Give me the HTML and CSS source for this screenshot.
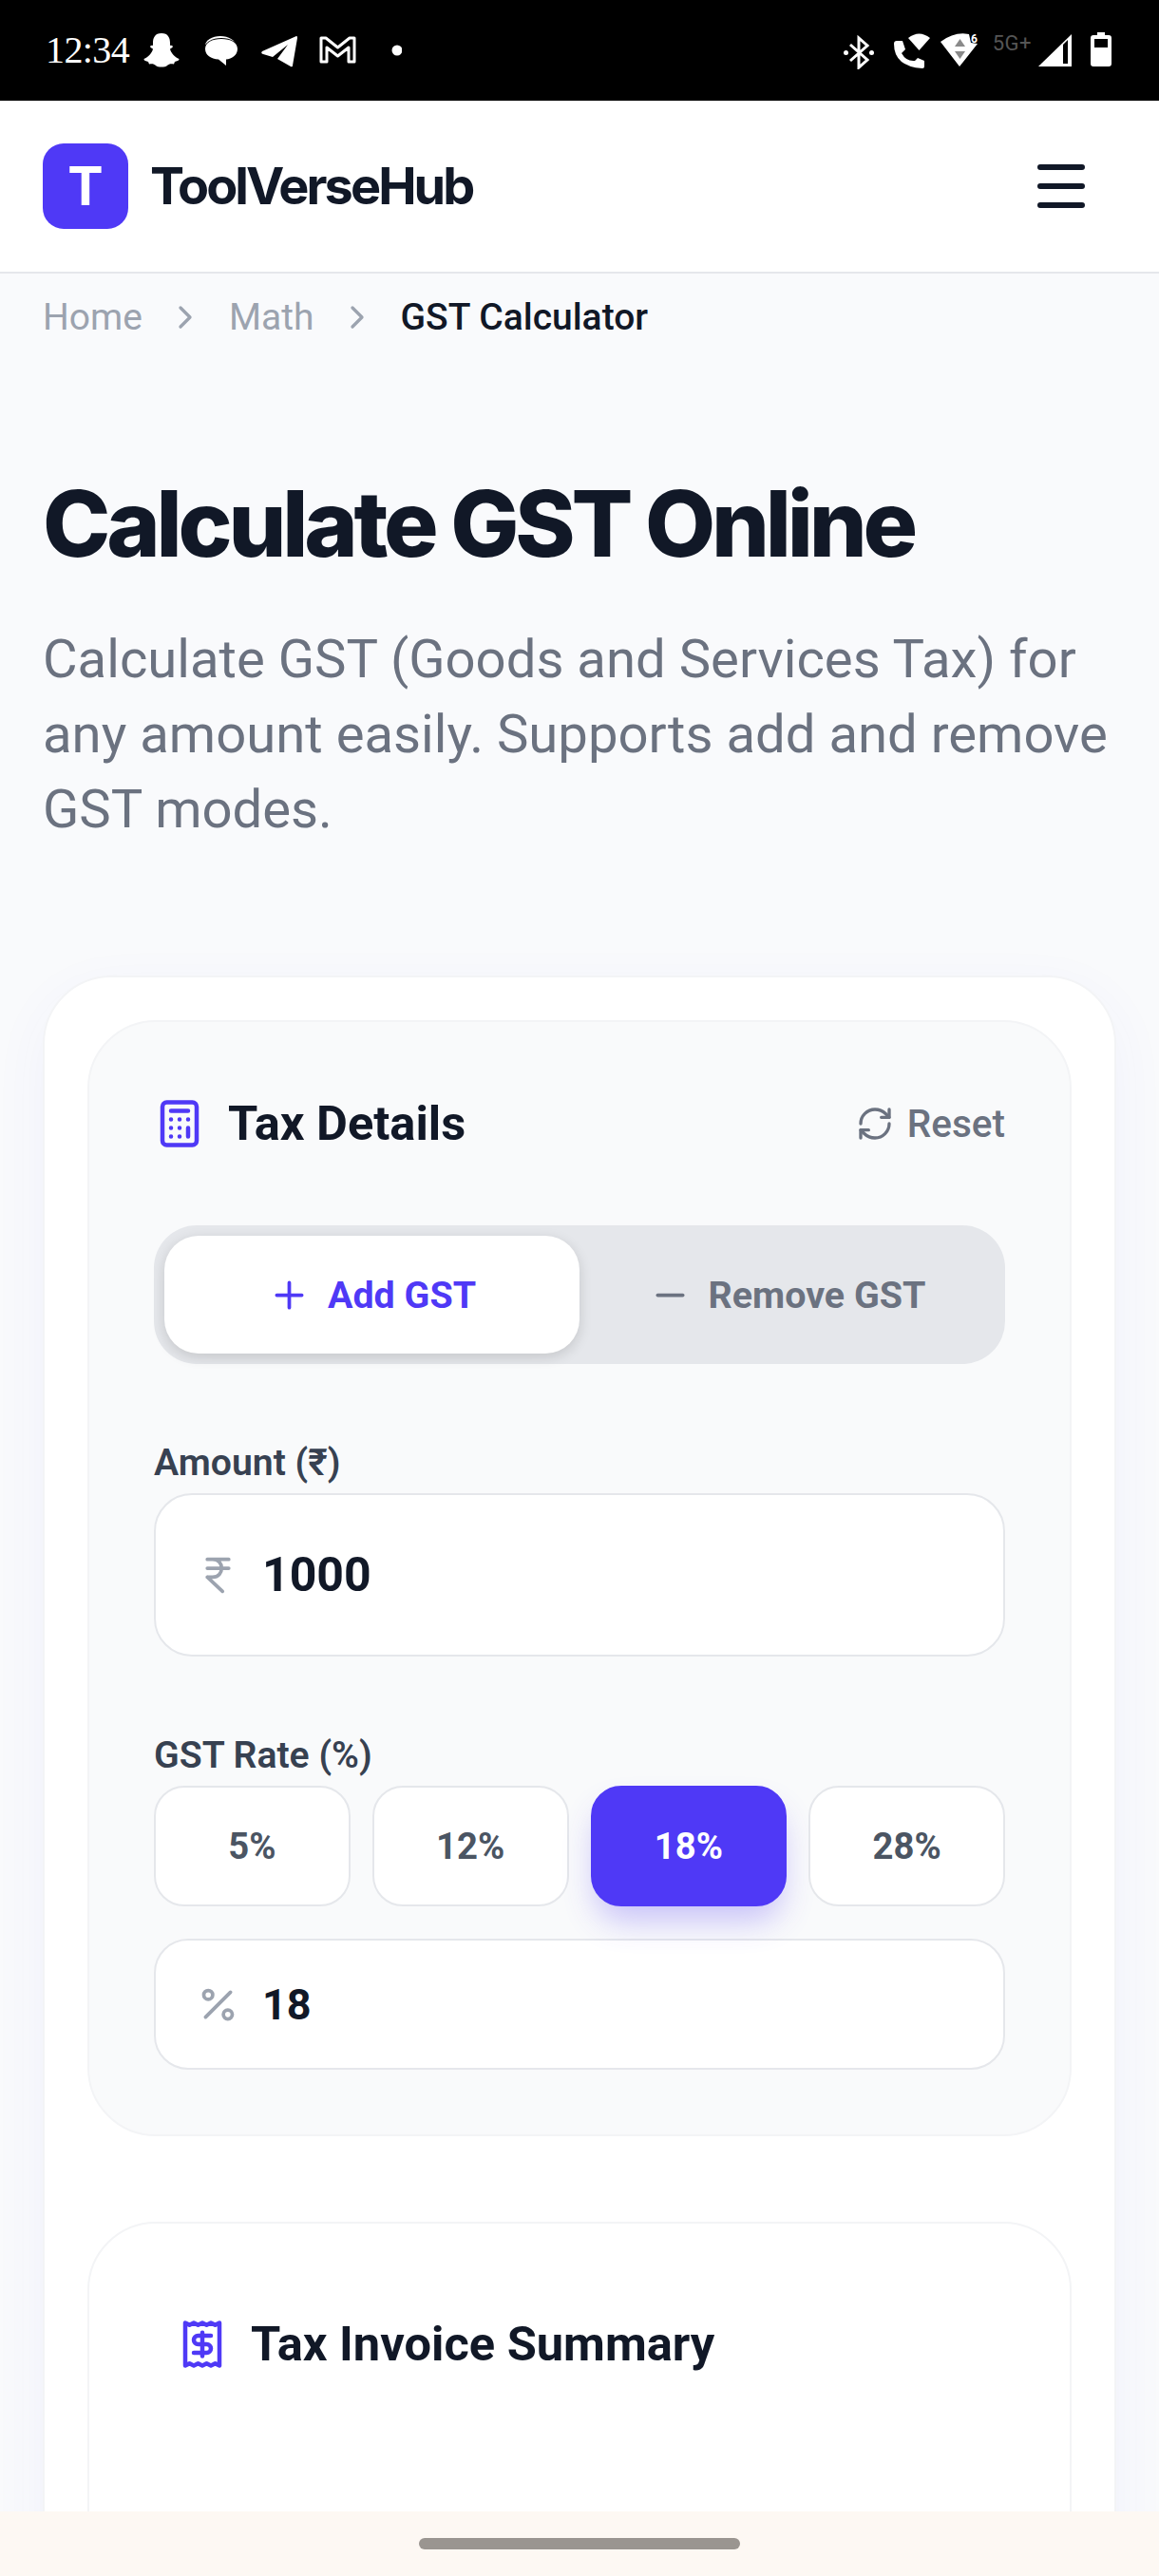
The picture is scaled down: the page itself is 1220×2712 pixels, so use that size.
FILE: index.html
```html
<!DOCTYPE html>
<html lang="en">
<head>
<meta charset="utf-8">
<title>GST Calculator - ToolVerseHub</title>
<link rel="stylesheet" href="styles.css">
</head>
<body>
<div class="status-bar">
  <div class="status-left">
    <span class="clock">12:34</span>
    <svg class="notif-icons" width="272" height="40" viewBox="0 0 272 40" fill="#fff">
      <path d="M19 2C12 2 10 7 10 12L10 15C8 14.5 6.5 15.5 7.5 17L10 18.5C9 23 5 27 .5 29C.5 31 3 31.5 5 32L6 34.5C9 34 11 34 13 36C15 38 23 38 25 36C27 34 29 34 32 34.5L33 32C35 31.5 37.5 31 37.5 29C33 27 29 23 28 18.5L30.5 17C31.5 15.5 30 14.5 28 15L28 12C28 7 26 2 19 2Z"/>
      <ellipse cx="81" cy="15" rx="16" ry="10"/>
      <ellipse cx="82" cy="18" rx="18" ry="11" fill="#000"/>
      <path d="M82 8C92 8 99 12 99 18.500C99 25 93 29 87 29.500L87 36L79 29.500C71 29 65 25 65 18.500C65 12 72 8 82 8Z"/>
      <path d="M161 5L125 21Q123 23 126 24L136 27L152 14L141 29L155 37Q157 38 157 36L162 7Q162 4.500 161 5Z"/>
      <path d="M187 7L192 7L204.500 17L217 7L222 7L222 32L216 32L216 17L204.500 26L193 17L193 32L187 32Z" fill="none" stroke="#fff" stroke-width="3" stroke-linejoin="round"/>
      <circle cx="267" cy="20" r="5.500"/>
    </svg>
  </div>
  <div class="status-right">
    <svg class="sys-icons" width="145" height="40" viewBox="0 0 145 40" fill="#fff">
      <path d="M7 14L25 30L16 38L16 7L25 15L7 31" fill="none" stroke="#fff" stroke-width="3"/>
      <circle cx="2.500" cy="22.500" r="2.500"/>
      <circle cx="29.500" cy="22.500" r="2.500"/>
      <path d="M68 7Q79.500 -2 91 7L79.500 20Z"/>
      <path d="M53 13Q53 10 56 10L62 10L65 19L61 23Q66 32 75 31L78 28L85 31L85 37Q85 39 83 39Q53 37 53 13Z"/>
      <path d="M102 11Q117 0 132 3L134 12L141 13L122 37Z"/>
      <path d="M122.500 8L117 16L128 16ZM117 21L128 21L122.500 29Z" fill="#8a8a8a"/>
      <text x="134" y="12" class="wifi-six">6</text>
    </svg>
    <span class="network-type">5G+</span>
    <svg class="sys-icons-end" width="77" height="40" viewBox="0 0 77 40" fill="#fff">
      <path d="M0 37L35 3L35 37Z"/>
      <path d="M26 14L31 9L31 34L26 34Z" fill="#000"/>
      <path d="M62 1H70V4H74Q77 4 77 7V34Q77 37 74 37H58Q55 37 55 34V7Q55 4 58 4H62Z"/>
      <rect x="59" y="8" width="14" height="9" fill="#000"/>
    </svg>
  </div>
</div>

<header class="site-header">
  <div class="brand">
    <span class="brand-mark">T</span>
    <span class="brand-name">ToolVerseHub</span>
  </div>
  <svg class="menu-icon" width="50" height="46" viewBox="0 0 50 46" fill="none" stroke="#111827" stroke-width="6" stroke-linecap="round">
    <path d="M3 3H47M3 23H47M3 43H47"/>
  </svg>
</header>

<main class="page">
  <nav class="crumbs">
    <span class="crumb">Home</span>
    <svg class="crumb-sep" width="40" height="40" viewBox="0 0 24 24" fill="none" stroke="#9ca3af" stroke-width="2" stroke-linecap="round" stroke-linejoin="round"><path d="m9 18 6-6-6-6"/></svg>
    <span class="crumb">Math</span>
    <svg class="crumb-sep" width="40" height="40" viewBox="0 0 24 24" fill="none" stroke="#9ca3af" stroke-width="2" stroke-linecap="round" stroke-linejoin="round"><path d="m9 18 6-6-6-6"/></svg>
    <span class="crumb crumb-current">GST Calculator</span>
  </nav>

  <h1 class="page-title">Calculate GST Online</h1>
  <p class="page-lead">Calculate GST (Goods and Services Tax) for any amount easily. Supports add and remove GST modes.</p>

  <section class="outer-card">
    <div class="details-card">
      <div class="card-head">
        <div class="card-title-wrap">
          <svg class="lucide" width="54" height="54" viewBox="0 0 24 24" fill="none" stroke="#4f39f6" stroke-width="2" stroke-linecap="round" stroke-linejoin="round"><rect width="16" height="20" x="4" y="2" rx="2"/><path d="M8 6h8M16 14v4M16 10h.01M12 10h.01M8 10h.01M12 14h.01M8 14h.01M12 18h.01M8 18h.01"/></svg>
          <h2 class="card-title">Tax Details</h2>
        </div>
        <div class="reset">
          <svg class="lucide" width="40" height="40" viewBox="0 0 24 24" fill="none" stroke="#6b7280" stroke-width="2" stroke-linecap="round" stroke-linejoin="round"><path d="M3 12a9 9 0 0 1 9-9 9.750 9.750 0 0 1 6.740 2.740L21 8"/><path d="M21 3v5h-5"/><path d="M21 12a9 9 0 0 1-9 9 9.750 9.750 0 0 1-6.740-2.740L3 16"/><path d="M8 16H3v5"/></svg>
          <span>Reset</span>
        </div>
      </div>

      <div class="mode-toggle">
        <div class="mode mode-active">
          <svg class="lucide" width="45" height="45" viewBox="0 0 24 24" fill="none" stroke="#4f39f6" stroke-width="2" stroke-linecap="round"><path d="M5 12h14M12 5v14"/></svg>
          <span>Add GST</span>
        </div>
        <div class="mode">
          <svg class="lucide" width="45" height="45" viewBox="0 0 24 24" fill="none" stroke="#6b7280" stroke-width="2" stroke-linecap="round"><path d="M5 12h14"/></svg>
          <span>Remove GST</span>
        </div>
      </div>

      <label class="field-label">Amount (₹)</label>
      <div class="input-box input-large">
        <svg class="lucide" width="45" height="45" viewBox="0 0 24 24" fill="none" stroke="#9ca3af" stroke-width="2" stroke-linecap="round" stroke-linejoin="round"><path d="M6 3h12M6 8h12M6 13l8.500 8M6 13h3M9 13c6.667 0 6.667-10 0-10"/></svg>
        <span class="input-value">1000</span>
      </div>

      <label class="field-label field-label-gap">GST Rate (%)</label>
      <div class="rates">
        <div class="rate">5%</div>
        <div class="rate">12%</div>
        <div class="rate rate-active">18%</div>
        <div class="rate">28%</div>
      </div>
      <div class="input-box input-small">
        <svg class="lucide" width="45" height="45" viewBox="0 0 24 24" fill="none" stroke="#9ca3af" stroke-width="2" stroke-linecap="round" stroke-linejoin="round"><path d="M19 5 5 19"/><circle cx="6.500" cy="6.500" r="2.500"/><circle cx="17.500" cy="17.500" r="2.500"/></svg>
        <span class="input-value">18</span>
      </div>
    </div>

    <div class="summary-card">
      <div class="card-title-wrap">
        <svg class="lucide" width="54" height="54" viewBox="0 0 24 24" fill="none" stroke="#4f39f6" stroke-width="2" stroke-linecap="round" stroke-linejoin="round"><path d="M4 2v20l2-1 2 1 2-1 2 1 2-1 2 1 2-1 2 1V2l-2 1-2-1-2 1-2-1-2 1-2-1-2 1Z"/><path d="M16 8h-6a2 2 0 1 0 0 4h4a2 2 0 1 1 0 4H8"/><path d="M12 17.500v-11"/></svg>
        <h2 class="card-title">Tax Invoice Summary</h2>
      </div>
    </div>
  </section>
</main>

<div class="nav-bar"><span class="nav-handle"></span></div>
</body>
</html>
```
FILE: styles.css
```css
* { box-sizing: border-box; }
html, body { margin: 0; padding: 0; }
body {
  height: 2712px;
  width: 1220px;
  overflow: hidden;
  display: flex;
  flex-direction: column;
  background: #f9fafc;
  font-family: Roboto, "Liberation Sans", sans-serif;
  color: #111827;
}

/* Status bar */
.status-bar {
  flex: 0 0 106px;
  background: #000;
  display: flex;
  align-items: center;
  justify-content: space-between;
  padding: 0 50px 0 48px;
}
.status-left, .status-right { display: flex; align-items: center; }
.clock {
  font-family: "Liberation Serif", serif;
  font-size: 40px;
  line-height: 46px;
  letter-spacing: -.6px;
  color: #fff;
  width: 103px;
}
.notif-icons, .sys-icons, .sys-icons-end { display: block; }
.wifi-six { font: 700 12px Roboto, sans-serif; fill: #fff; }
.network-type {
  font-size: 22px;
  line-height: 24px;
  color: #555;
  margin: -15px 7px 0 12px;
  letter-spacing: .5px;
}

/* Header */
.site-header {
  flex: 0 0 182px;
  background: #fff;
  border-bottom: 2px solid #e5e7eb;
  display: flex;
  align-items: center;
  justify-content: space-between;
  padding: 0 78px 0 45px;
}
.brand { display: flex; align-items: center; gap: 23px; }
.brand-mark {
  width: 90px;
  height: 90px;
  border-radius: 22px;
  background: #4f39f6;
  color: #fff;
  display: flex;
  align-items: center;
  justify-content: center;
  font: 700 56px Inter, sans-serif;
}
.brand-name {
  font: 700 54px/1 Inter, sans-serif;
  letter-spacing: -2.900px;
  color: #111827;
}

/* Page */
.page {
  flex: 1;
  min-height: 0;
  overflow: hidden;
  padding: 0 45px;
}
.crumbs {
  display: flex;
  align-items: center;
  height: 36px;
  margin-top: 28px;
  font-size: 39px;
  line-height: 36px;
}
.crumb { color: #9ca3af; }
.crumb-current { color: #111827; font-weight: 500; }
.crumb-sep { margin: 0 25.500px; }
.page-title {
  margin: 144px 0 0;
  font: 800 96px/110px Inter, sans-serif;
  letter-spacing: -4.200px;
  color: #111827;
}
.page-lead {
  margin: 49px 0 0;
  font: 400 56.250px/79px Roboto, sans-serif;
  color: #6b7280;
}

/* Cards */
.outer-card {
  margin-top: 135px;
  background: #fff;
  border: 2px solid #f3f4f6;
  border-radius: 72px;
  padding: 45px;
  box-shadow: 0 18px 60px rgba(79, 70, 229, .05);
}
.details-card {
  background: #f9fafb;
  border: 2px solid #f3f4f6;
  border-radius: 72px;
  padding: 80px 68px 68px;
}
.card-head {
  display: flex;
  align-items: center;
  justify-content: space-between;
  height: 54px;
  margin-bottom: 80px;
}
.card-title-wrap { display: flex; align-items: center; gap: 24px; }
.lucide { display: block; flex: none; }
.card-title {
  margin: 0;
  font: 700 50.600px/54px Roboto, sans-serif;
  color: #111827;
}
.reset {
  display: flex;
  align-items: center;
  gap: 14px;
  font-size: 40.500px;
  font-weight: 500;
  color: #6b7280;
}
.mode-toggle {
  display: flex;
  height: 146px;
  padding: 11px;
  background: #e5e7eb;
  border-radius: 45px;
}
.mode {
  flex: 1;
  display: flex;
  align-items: center;
  justify-content: center;
  gap: 18px;
  font-size: 39.400px;
  font-weight: 700;
  color: #6b7280;
  border-radius: 36px;
}
.mode-active {
  background: #fff;
  color: #4f39f6;
  box-shadow: 0 4px 14px rgba(0, 0, 0, .14);
}
.field-label {
  display: block;
  margin: 80px 0 8px;
  font-size: 39.200px;
  font-weight: 600;
  line-height: 48px;
  color: #374151;
}
.input-box {
  display: flex;
  align-items: center;
  gap: 24px;
  background: #fff;
  border: 2px solid #e5e7eb;
  padding-left: 43px;
}
.input-large { height: 172px; border-radius: 40px; }
.input-small { height: 138px; border-radius: 36px; margin-top: 34px; }
.input-value { font-weight: 700; color: #111827; }
.input-large .input-value { font-size: 50px; }
.input-small .input-value { font-size: 45px; }
.rates {
  display: grid;
  grid-template-columns: repeat(4, 1fr);
  gap: 23px;
}
.rate {
  height: 127px;
  display: flex;
  align-items: center;
  justify-content: center;
  background: #fff;
  border: 2px solid #e5e7eb;
  border-radius: 32px;
  font-size: 38.250px;
  font-weight: 700;
  color: #4b5563;
}
.rate-active {
  background: #4f39f6;
  border-color: #4f39f6;
  color: #fff;
  box-shadow: 0 20px 34px -6px rgba(79, 57, 246, .3);
}
.summary-card {
  margin-top: 90px;
  height: 600px;
  background: #fff;
  border: 2px solid #f3f4f6;
  border-radius: 72px;
  padding: 100px 92px;
}

/* Android nav bar */
.nav-bar {
  flex: 0 0 68px;
  background: #fdf8f3;
  display: flex;
  justify-content: center;
  padding-top: 28px;
}
.nav-handle {
  width: 338px;
  height: 12px;
  border-radius: 6px;
  background: #9a9590;
}
```
